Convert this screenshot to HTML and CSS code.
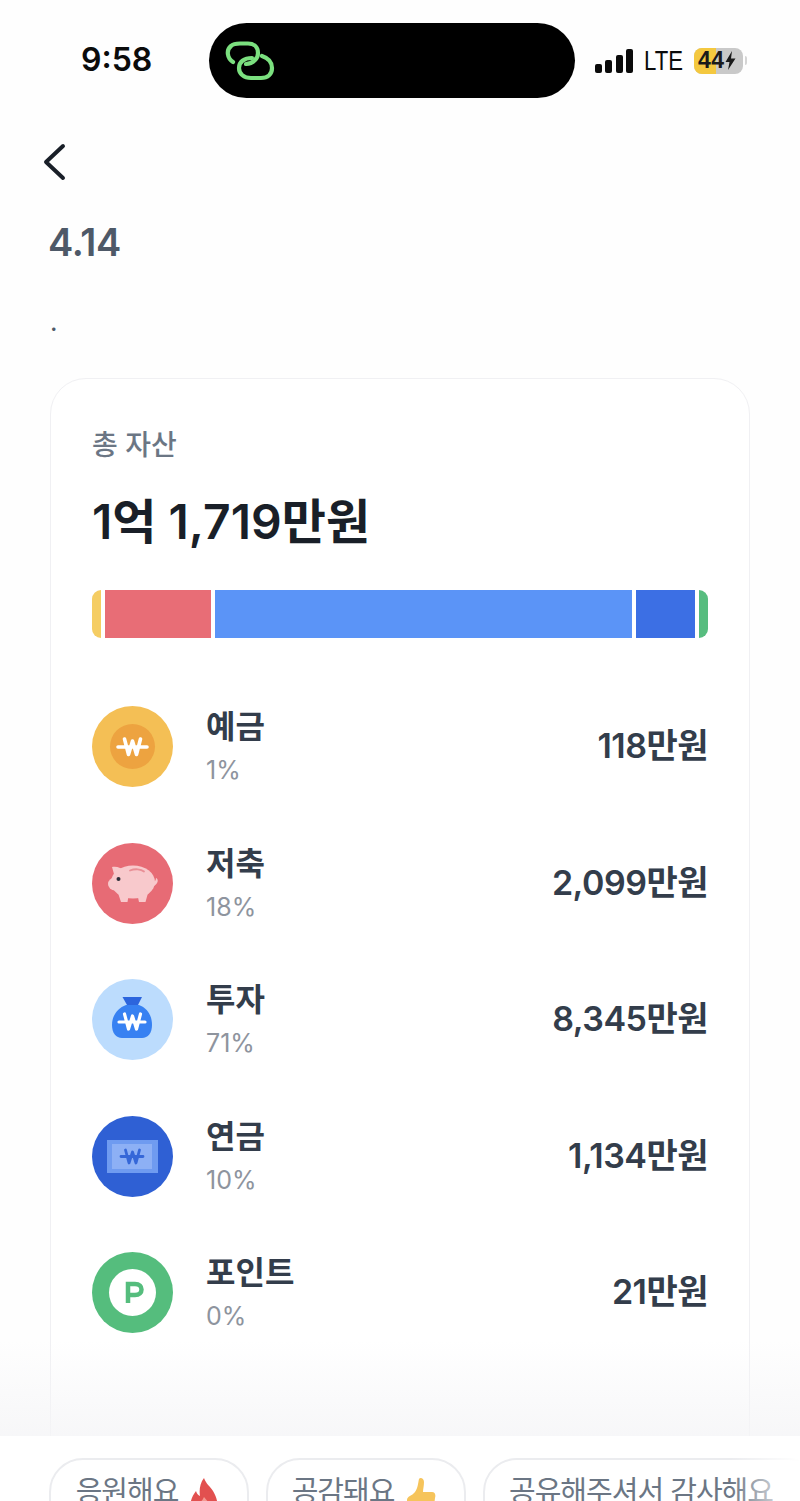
FILE: index.html
```html
<!DOCTYPE html>
<html lang="ko">
<head>
    <meta charset="UTF-8">
    <title>4.14</title>
    <link rel="stylesheet" href="styles.css">
</head>
<body>
<div class="page">
    <div class="scroll">
        <div class="statusbar">
            <div class="time">9:58</div>
            <div class="island">
                <svg class="island-icon" width="50" height="40" viewBox="0 0 50 40" fill="none" stroke="#7be07f" stroke-width="4.2" stroke-linecap="round">
                    <path d="M8 21 C2 17 1 9 6 5 C8 3 11 2.500 15 2.500 H23 C29 2.500 33 6 33 12 C33 18 28 22.500 21 23"/>
                    <path d="M37 15 C43 17 47 21 47 27 C47 33 43 37 36 37 H26 C19 37 14 33 14 27 C14 21 19 17 27 17"/>
                </svg>
            </div>
            <div class="status-right">
                <div class="signal">
                    <span class="sig1"></span><span class="sig2"></span><span class="sig3"></span><span class="sig4"></span>
                </div>
                <div class="lte">LTE</div>
                <div class="battery">
                    <div class="battery-fill"></div>
                    <div class="battery-text">44<svg width="11" height="19" viewBox="0 0 11 19"><path d="M7 0 L0.500 11 L4.500 11 L3 19 L10.500 7.500 L6 7.500 Z" fill="#1a1a1a"/></svg></div>
                </div>
                <div class="battery-nub"></div>
            </div>
        </div>

        <div class="back">
            <svg width="24" height="38" viewBox="0 0 24 38" fill="none" stroke="#191f28" stroke-width="4" stroke-linecap="round" stroke-linejoin="round"><path d="M21 3 L4 19 L21 35"/></svg>
        </div>
        <div class="title">4.14</div>
        <div class="dot-text">.</div>

        <div class="card">
            <div class="card-label">총 자산</div>
            <div class="card-total">1억 1,719만원</div>
            <div class="stack">
                <div class="seg seg-yellow"></div>
                <div class="seg seg-red"></div>
                <div class="seg seg-blue"></div>
                <div class="seg seg-navy"></div>
                <div class="seg seg-green"></div>
            </div>
            <div class="rows">
                <div class="row">
                    <svg class="icon" viewBox="0 0 81 81">
                        <circle cx="40.500" cy="40.500" r="40.500" fill="#f4bf55"/>
                        <circle cx="40.500" cy="40.500" r="22.500" fill="#eda340"/>
                        <path d="M26 41 H55 M32.500 33 L36.500 48.500 L40.500 35 L44.500 48.500 L48.500 33" fill="none" stroke="#fff" stroke-width="3.600" stroke-linecap="round" stroke-linejoin="round"/>
                    </svg>
                    <div class="info">
                        <div class="name">예금</div>
                        <div class="pct">1%</div>
                    </div>
                    <div class="amount">118만원</div>
                </div>
                <div class="row">
                    <svg class="icon" viewBox="0 0 81 81">
                        <circle cx="40.500" cy="40.500" r="40.500" fill="#e76b75"/>
                        <ellipse cx="41" cy="39" rx="22" ry="16.500" fill="#f8c9cc"/>
                        <path d="M20 24 C25 23 29 25 33 28 L24 38 Z" fill="#f8c9cc"/>
                        <ellipse cx="23" cy="41" rx="7" ry="6.500" fill="#f8c9cc"/>
                        <path d="M26 50 H37 L35.500 59 H29 Z M45 50 H56 L53.500 59 H47 Z" fill="#f8c9cc"/>
                        <path d="M61 39 C63 39 64 37 64 35 C67 36 66 41 62 43 Z" fill="#f8c9cc"/>
                        <path d="M38 27.500 C43 25.500 49 26 52 28.500" fill="none" stroke="#e98f96" stroke-width="1.800" stroke-linecap="round"/>
                        <circle cx="26.500" cy="36" r="2" fill="#2c2f3a"/>
                    </svg>
                    <div class="info">
                        <div class="name">저축</div>
                        <div class="pct">18%</div>
                    </div>
                    <div class="amount">2,099만원</div>
                </div>
                <div class="row">
                    <svg class="icon" viewBox="0 0 81 81">
                        <circle cx="40.500" cy="40.500" r="40.500" fill="#bcdcfd"/>
                        <path d="M30.500 18 H50 L46 26 H35 Z" fill="#2c65dd"/>
                        <path d="M34 26 H47 C55 29 60 36 60 46 C60 54 56 59 50 59 H30 C24 59 20 54 20 46 C20 36 26 29 34 26 Z" fill="#3781f2"/>
                        <path d="M27 43 H53 M32.500 35 L36.500 50 L40.500 37 L44.500 50 L48.500 35" fill="none" stroke="#fff" stroke-width="3.200" stroke-linecap="round" stroke-linejoin="round"/>
                    </svg>
                    <div class="info">
                        <div class="name">투자</div>
                        <div class="pct">71%</div>
                    </div>
                    <div class="amount">8,345만원</div>
                </div>
                <div class="row">
                    <svg class="icon" viewBox="0 0 81 81">
                        <circle cx="40.500" cy="40.500" r="40.500" fill="#2f60d4"/>
                        <rect x="15" y="24" width="51" height="33" fill="#6f9bf0"/>
                        <rect x="20" y="28" width="40" height="25" fill="#8db0f5"/>
                        <path d="M29 40.500 H51 M33.500 34 L37 47 L40.500 36 L44 47 L47.500 34" fill="none" stroke="#3567d8" stroke-width="2.800" stroke-linecap="round" stroke-linejoin="round"/>
                    </svg>
                    <div class="info">
                        <div class="name">연금</div>
                        <div class="pct">10%</div>
                    </div>
                    <div class="amount">1,134만원</div>
                </div>
                <div class="row">
                    <svg class="icon" viewBox="0 0 81 81">
                        <circle cx="40.500" cy="40.500" r="40.500" fill="#55bd7d"/>
                        <circle cx="40.500" cy="40.500" r="23.500" fill="#fff"/>
                        <path d="M36 51 V32 H43 C47.500 32 49.500 34.500 49.500 37.500 C49.500 40.500 47.500 43 43 43 H36" fill="none" stroke="#55bd7d" stroke-width="4.500"/>
                    </svg>
                    <div class="info">
                        <div class="name">포인트</div>
                        <div class="pct">0%</div>
                    </div>
                    <div class="amount">21만원</div>
                </div>
            </div>
        </div>
        <div class="fade"></div>
    </div>

    <div class="reactions">
        <div class="chip">응원해요
            <svg width="28" height="40" viewBox="0 0 28 40"><path d="M14 0 C16 6 20 8 23 13 C26 18 28 23 27 29 C26 36 20 40 14 40 C7 40 1 36 0.500 29 C0 22 3 17 6 13 C7 16 8 17 10 18 C9 12 10 5 14 0 Z" fill="#e2504f"/><path d="M14 19 C17 23 21 26 21 31 C21 36 18 40 14 40 C10 40 7 36 7 31 C7 26 12 24 14 19 Z" fill="#f59a93"/></svg>
        </div>
        <div class="chip">공감돼요
            <svg width="30" height="40" viewBox="0 0 30 40"><path d="M9 14 C12 10 12 5 13 1 C14 -1 18 0 18 4 C18 8 17 11 17 14 H26 C29 14 30 17 29 20 L27 36 C26 39 24 40 22 40 H8 C4 40 1 38 1 34 V22 C1 18 6 18 9 14 Z" fill="#f6c45b"/></svg>
        </div>
        <div class="chip chip-last">공유해주셔서 감사해요</div>
        <div class="reactions-fade"></div>
    </div>
</div>
</body>
</html>
```

FILE: styles.css
```css
html, body {
    margin: 0;
    padding: 0;
    background: #fff;
}
.page {
    width: 800px;
    height: 1501px;
    overflow: hidden;
    position: relative;
    font-family: Inter, "Noto Sans CJK KR", sans-serif;
    background: #fefefe;
}
.scroll {
    height: 1436px;
    overflow: hidden;
    position: relative;
}

/* status bar */
.statusbar {
    height: 98px;
    padding-top: 23px;
    box-sizing: border-box;
    display: flex;
    align-items: stretch;
}
.time {
    width: 209px;
    box-sizing: border-box;
    padding-left: 81px;
    padding-top: 14px;
    font-family: Inter, sans-serif;
    font-weight: 600;
    font-size: 32px;
    line-height: 46px;
    color: #0b0b0b;
}
.island {
    width: 366px;
    height: 75px;
    background: #000;
    border-radius: 37.500px;
    display: flex;
    align-items: center;
    padding-left: 16px;
    box-sizing: border-box;
}
.status-right {
    display: flex;
    align-items: center;
    padding-left: 20px;
    height: 75px;
}
.signal {
    display: flex;
    align-items: flex-end;
    gap: 3.500px;
    height: 24px;
    width: 38px;
}
.signal span {
    width: 7px;
    background: #0b0b0b;
    border-radius: 2px;
}
.sig1 { height: 9px; }
.sig2 { height: 13px; }
.sig3 { height: 18px; }
.sig4 { height: 24px; }
.lte {
    margin-left: 11px;
    font-family: "Liberation Sans", sans-serif;
    font-size: 27px;
    line-height: 30px;
    width: 39px;
    color: #0b0b0b;
    transform: scaleX(0.82);
    transform-origin: left center;
}
.battery {
    margin-left: 11px;
    width: 49px;
    height: 26px;
    border-radius: 8px;
    background: #c9c9c9;
    overflow: hidden;
    position: relative;
}
.battery-fill {
    width: 22px;
    height: 26px;
    background: #f4c83f;
}
.battery-text {
    position: absolute;
    left: 4px;
    top: 0;
    display: flex;
    align-items: center;
    height: 26px;
    font-family: "Liberation Sans", sans-serif;
    font-weight: 700;
    font-size: 23px;
    color: #1a1a1a;
    letter-spacing: 0.500px;
}
.battery-nub {
    width: 2px;
    height: 9px;
    margin-left: 2px;
    background: #d5d5d5;
    border-radius: 0 2px 2px 0;
}

/* header */
.back {
    padding: 45px 0 0 42px;
    height: 38px;
}
.back svg {
    display: block;
}
.title {
    margin: 36px 0 0 48px;
    font-size: 38px;
    line-height: 50px;
    font-weight: 600;
    letter-spacing: -0.300px;
    color: #4e5968;
}
.dot-text {
    margin: 35px 0 0 50px;
    font-size: 26px;
    line-height: 40px;
    color: #4e5968;
}

/* card */
.card {
    margin: 36px 50px 0;
    width: 700px;
    height: 1120px;
    box-sizing: border-box;
    border: 1.500px solid #f0f0f3;
    border-radius: 36px;
    padding: 46px 41px 0 41px;
    background: #fff;
}
.card-label {
    font-size: 28px;
    line-height: 40px;
    font-weight: 500;
    color: #6b7684;
}
.card-total {
    margin-top: 27px;
    font-size: 48px;
    line-height: 60px;
    font-weight: 600;
    color: #191f28;
}
.stack {
    margin-top: 38px;
    height: 48px;
    display: flex;
    gap: 4px;
}
.seg {
    height: 48px;
}
.seg-yellow { width: 9px; background: #f5cd63; border-radius: 9px 0 0 9px; }
.seg-red { width: 106px; background: #e86d76; }
.seg-blue { width: 417px; background: #5b94f7; }
.seg-navy { width: 59px; background: #3c6fe4; }
.seg-green { width: 9px; background: #57bd7f; border-radius: 0 9px 9px 0; }
.rows {
    margin-top: 68px;
    display: flex;
    flex-direction: column;
    gap: 55.500px;
}
.row {
    height: 81px;
    display: flex;
    align-items: center;
}
.icon {
    width: 81px;
    height: 81px;
    flex: none;
}
.info {
    margin-left: 33px;
    flex: 1;
}
.name {
    font-size: 32px;
    line-height: 40px;
    font-weight: 600;
    color: #333d4b;
    margin-top: 4px;
}
.pct {
    margin-top: 3px;
    font-size: 25px;
    line-height: 40px;
    color: #8e949e;
    font-weight: 400;
}
.amount {
    font-size: 34px;
    line-height: 46px;
    font-weight: 600;
    color: #333d4b;
    letter-spacing: -0.500px;
    margin-top: -1px;
}
.fade {
    position: absolute;
    left: 0;
    right: 0;
    bottom: 0;
    height: 96px;
    background: linear-gradient(rgba(245, 245, 247, 0), rgba(245, 245, 247, 0.8));
}

/* bottom reactions */
.reactions {
    height: 65px;
    padding: 22px 0 0 49px;
    display: flex;
    gap: 17px;
    position: relative;
    background: #fff;
}
.chip {
    flex: none;
    width: 200px;
    height: 90px;
    box-sizing: border-box;
    border: 2px solid #ebecef;
    border-radius: 34px;
    display: flex;
    justify-content: center;
    align-items: flex-start;
    gap: 12px;
    padding: 10px 4px 0 0;
    font-size: 29px;
    line-height: 44px;
    font-weight: 400;
    color: #6b7684;
    letter-spacing: -1px;
    white-space: nowrap;
}
.chip svg {
    margin-top: 8px;
    flex: none;
}
.chip-last {
    width: 340px;
    justify-content: flex-start;
    padding-left: 24px;
}
.reactions-fade {
    position: absolute;
    right: 0;
    top: 0;
    bottom: 0;
    width: 70px;
    background: linear-gradient(to right, rgba(255, 255, 255, 0), #fff);
}
```
